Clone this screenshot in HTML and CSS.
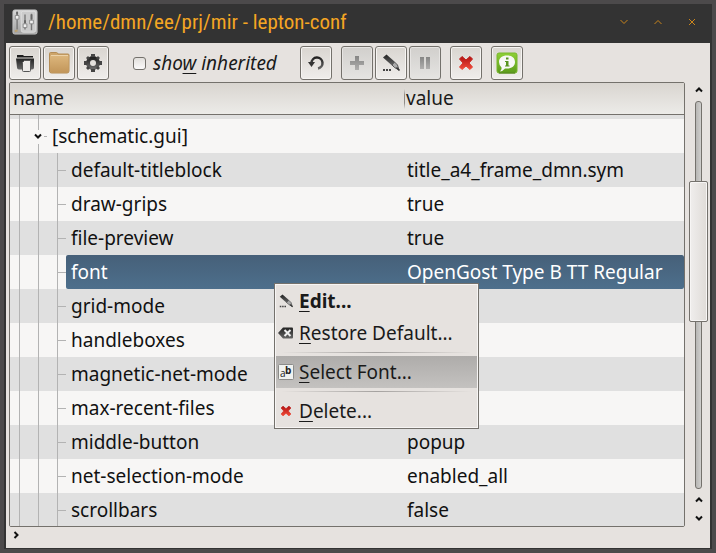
FILE: index.html
```html
<!DOCTYPE html>
<html lang="en">
<head>
<meta charset="utf-8">
<title>/home/dmn/ee/prj/mir - lepton-conf</title>
<link rel="stylesheet" href="styles.css">
</head>
<body>
<svg class="defs" aria-hidden="true">
  <defs>
    <linearGradient id="dark" x1="0" y1="0" x2="0" y2="1"><stop offset="0" stop-color="#222"/><stop offset="1" stop-color="#666"/></linearGradient>
    <linearGradient id="red" x1="0" y1="0" x2="0" y2="1"><stop offset="0" stop-color="#b31212"/><stop offset="1" stop-color="#f04c3a"/></linearGradient>
    <linearGradient id="tan" x1="0" y1="0" x2="0" y2="1"><stop offset="0" stop-color="#dcb67c"/><stop offset="1" stop-color="#c2965a"/></linearGradient>
    <linearGradient id="green" x1="0" y1="0" x2="0" y2="1"><stop offset="0" stop-color="#8ed036"/><stop offset="1" stop-color="#5c9c1c"/></linearGradient>
    <linearGradient id="silver" x1="0" y1="0" x2="0" y2="1"><stop offset="0" stop-color="#d8d8d8"/><stop offset="1" stop-color="#a2a2a2"/></linearGradient>
    <linearGradient id="faded" x1="0" y1="0" x2="0" y2="1"><stop offset="0" stop-color="#858584"/><stop offset="1" stop-color="#b0afae"/></linearGradient>
    <symbol id="pencil" viewBox="0 0 18 18">
      <path d="M1 3.500 4.500 0.500 13 8 10 11.500Z" fill="url(#dark)"/>
      <path d="M10 11 12.500 8 15.500 11 17 16 12.500 13.500Z" fill="#aaa" stroke="#555"/>
      <path d="M14.500 13.500 17.500 16.500" stroke="#333" stroke-width="1.500"/>
      <path d="M1 16h2M4 16h2M7 16h2" stroke="#444" stroke-width="2"/>
    </symbol>
    <symbol id="cross" viewBox="0 0 16 16">
      <path d="M4 1.500 8 5 12 1.500 14.500 4 11 8 14.500 12 12 14.500 8 11 4 14.500 1.500 12 5 8 1.500 4Z" fill="url(#red)" stroke="url(#red)" stroke-linejoin="round"/>
    </symbol>
  </defs>
</svg>
<div class="window">
  <header class="titlebar">
    <svg class="app-icon" width="26" height="26" viewBox="0 0 28 28" aria-hidden="true">
      <rect x="1" y="1" width="26" height="26" rx="2" fill="url(#silver)" stroke="#c5c5c5"/>
      <rect x="10" y="2.500" width="15.500" height="22.500" rx="2" fill="#cbcbcb" stroke="#dedede"/>
      <path d="M5.500 3v19M14 6v16M21 5v18" stroke="#777" stroke-width="1.500"/>
      <path d="M5.500 3v3M14 12v4M21 6v5" stroke="#666" stroke-width="2"/>
      <path d="M3.500 7h4v4h-4zM12 16h4v4h-4zM19 12h4v4h-4z" fill="#f0f0f0" stroke="#888"/>
      <path d="M3 24l3-1" stroke="#bca26e" stroke-width="2"/>
    </svg>
    <h1>/home/dmn/ee/prj/mir - lepton-conf</h1>
    <div class="win-controls">
      <button aria-label="Minimize"><svg width="8" height="8" viewBox="0 0 8 8"><path d="M0.500 2 4 5.500 7.500 2"/></svg></button>
      <button aria-label="Maximize"><svg width="8" height="8" viewBox="0 0 8 8"><path d="M0.500 6 4 2.500 7.500 6"/></svg></button>
      <button aria-label="Close"><svg width="8" height="8" viewBox="0 0 8 8"><path d="M1 1 7 7M7 1 1 7"/></svg></button>
    </div>
  </header>
  <main>
    <div class="toolbar">
      <div class="group">
        <button class="tool" aria-label="Load file"><svg width="20" height="20" viewBox="0 0 20 20"><path d="M2 4V2h6l1 1h9v1.500H2Z" fill="#1d1d1d"/><path d="M1 5.500h18v9q0 2-2 2H4q-2 0-2-2Z" fill="url(#dark)"/><path d="M9.500 7.500h6v10q0 1-1 1h-6q-1 0-1-1v-8Z" fill="#eceae8" stroke="#555"/></svg></button>
        <button class="tool" aria-label="Open folder"><svg width="22" height="22" viewBox="0 0 22 22"><path d="M1.500 3V1.500q0-1 1-1h6q1 0 1.500 1.500h10q1 0 1 1v16q0 2-2 2H3.500q-2 0-2-2Z" fill="#cda469" stroke="#b48c55"/><path d="M2 3.500h18.500v15q0 2-2 2H4q-2 0-2-2Z" fill="url(#tan)"/><path d="M3 3.500h17" stroke="#ecd2a8"/></svg></button>
        <button class="tool" aria-label="Settings"><svg width="20" height="20" viewBox="0 0 20 20"><circle cx="10" cy="10" r="5" fill="none" stroke="url(#dark)" stroke-width="4"/><path d="M8 1h4v3h-4zM8 16h4v3h-4zM1 8h3v4h-3zM16 8h3v4h-3z" fill="#444"/><path d="M3 5 5 3 7 5 5 7zM15 3 17 5 15 7 13 5zM3 15 5 13 7 15 5 17zM13 15 15 13 17 15 15 17z" fill="#444"/></svg></button>
      </div>
      <label class="inherited" for="inh"><input type="checkbox" id="inh"><span>sho<u>w</u> inherited</span></label>
      <button class="tool" aria-label="Reload"><svg width="18" height="18" viewBox="0 0 18 18"><path d="M4.500 10V9A5.500 5.500 0 1 1 11 14.500" fill="none" stroke="url(#dark)" stroke-width="2.500"/><path d="M1 8h7l-3.500 5Z" fill="#333"/></svg></button>
      <div class="group">
        <button class="tool" disabled aria-label="Add"><svg width="14" height="14" viewBox="0 0 14 14"><path d="M5 0h4v5h5v4H9v5H5V9H0V5h5Z" fill="url(#faded)"/></svg></button>
        <button class="tool" aria-label="Edit"><svg width="18" height="18"><use href="#pencil"/></svg></button>
        <button class="tool" disabled aria-label="Toggle"><svg width="12" height="12" viewBox="0 0 12 12"><path d="M1 0h4v12H1zM7 0h4v12H7z" fill="url(#faded)"/></svg></button>
      </div>
      <button class="tool" aria-label="Delete"><svg width="16" height="16"><use href="#cross"/></svg></button>
      <button class="tool" aria-label="About"><svg width="22" height="22" viewBox="0 0 22 22"><rect x="1" y="1" width="20" height="20" rx="2" fill="url(#green)" stroke="#79b82d"/><path d="M3 21h16" stroke="#4d7a1d"/><path d="M11 3.500c5 0 8 2.500 8 6.500s-3 6.500-8 6.500q-1 0-2 0-2 2.500-5 3 2-2 1.500-4Q3 13 3 10c0-4 3-6.500 8-6.500Z" fill="#f8f8f6"/><path d="M10 5.500h2.500v2h-2.500zM9 9h3.500v4.500h1v1H9v-1h1v-3.500H9z" fill="#589420"/></svg></button>
    </div>
    <div class="browser">
      <div class="list">
        <table>
          <colgroup><col class="col-name"><col></colgroup>
          <thead><tr><th>name</th><th>value</th></tr></thead>
          <tbody>
            <tr class="cut odd"><td colspan="2"></td></tr>
            <tr class="section"><td><svg class="expander" width="8" height="7" viewBox="0 0 8 7" aria-hidden="true"><path d="M1 1.500 4 4.500 7 1.500"/></svg>[schematic.gui]</td><td></td></tr>
            <tr class="odd"><td><span>default-titleblock</span></td><td>title_a4_frame_dmn.sym</td></tr>
            <tr><td><span>draw-grips</span></td><td>true</td></tr>
            <tr class="odd"><td><span>file-preview</span></td><td>true</td></tr>
            <tr class="selected"><td><span>font</span></td><td>OpenGost Type B TT Regular</td></tr>
            <tr class="odd"><td><span>grid-mode</span></td><td></td></tr>
            <tr><td><span>handleboxes</span></td><td></td></tr>
            <tr class="odd"><td><span>magnetic-net-mode</span></td><td></td></tr>
            <tr><td><span>max-recent-files</span></td><td></td></tr>
            <tr class="odd"><td><span>middle-button</span></td><td>popup</td></tr>
            <tr><td><span>net-selection-mode</span></td><td>enabled_all</td></tr>
            <tr class="odd"><td><span>scrollbars</span></td><td>false</td></tr>
          </tbody>
        </table>
      </div>
      <div class="scrollbar">
        <svg class="arrow" width="8" height="6" viewBox="0 0 8 6"><path d="M1 4.500 4 1.500 7 4.500"/></svg>
        <div class="track"><div class="thumb"></div></div>
        <svg class="arrow" width="8" height="6" viewBox="0 0 8 6"><path d="M1 4.500 4 1.500 7 4.500"/></svg>
        <svg class="arrow" width="8" height="6" viewBox="0 0 8 6"><path d="M1 1.500 4 4.500 7 1.500"/></svg>
      </div>
    </div>
    <footer><svg class="arrow" width="6" height="8" viewBox="0 0 6 8"><path d="M1.500 1 4.500 4 1.500 7"/></svg></footer>
  </main>
  <div class="menu" role="menu">
    <button role="menuitem" class="default"><svg class="small" width="14" height="14"><use href="#pencil"/></svg><span><u>E</u>dit...</span></button>
    <button role="menuitem"><svg width="16" height="16" viewBox="0 0 16 16"><path d="M0 8 5 2.500h9q1 0 1 1v9q0 1-1 1H5Z" fill="url(#dark)"/><path d="M6.500 5l6 6M12.500 5l-6 6" stroke="#eee" stroke-width="2"/></svg><span><u>R</u>estore Default...</span></button>
    <hr>
    <button role="menuitem" class="active"><svg class="font-icon" width="16" height="16" viewBox="0 0 16 16"><rect x="0.500" y="0.500" width="15" height="15" rx="1" fill="#f0f2f0" stroke="#8b8b89"/><text x="2" y="13" class="glyph">a</text><text x="7" y="10" class="glyph strong">b</text></svg><span><u>S</u>elect Font...</span></button>
    <hr>
    <button role="menuitem"><svg class="cross" width="12" height="12"><use href="#cross"/></svg><span><u>D</u>elete...</span></button>
  </div>
</div>
</body>
</html>
```
FILE: styles.css
```css
* { box-sizing: border-box; }

body {
  margin: 0;
  height: 100vh;
  overflow: hidden;
  background: #4c4a4b;
  color: #1a1a1a;
  font: 19px/28px "Noto Sans", "Open Sans", sans-serif;
}

button { margin: 0; font: inherit; color: inherit; }
svg { display: block; flex: none; }
.defs { position: absolute; width: 0; height: 0; }
u { text-decoration-thickness: 1px; text-underline-offset: 3px; }

.window {
  height: 100%;
  display: flex;
  flex-direction: column;
  border: 4px solid #4c4a4b;
  background: #333;
  padding: 0 2px 1px;
}

.titlebar {
  height: 39px;
  flex: none;
  display: flex;
  align-items: center;
  gap: 10px;
  padding: 0 8px 4px 6px;
}
.titlebar h1 {
  flex: 1;
  margin: 0;
  color: #f5a623;
  font: 400 21px/28px "Roboto Condensed", Roboto, sans-serif;
  white-space: nowrap;
}
.win-controls { display: flex; gap: 14px; }
.win-controls button {
  width: 20px;
  height: 20px;
  padding: 0;
  border: 0;
  background: none;
  display: grid;
  place-items: center;
}
.win-controls path { fill: none; stroke: #c9851c; }

main {
  flex: 1;
  min-height: 0;
  display: flex;
  flex-direction: column;
  background: #e6e2df;
}

.toolbar {
  display: flex;
  align-items: center;
  gap: 9px;
  padding: 3px 3px 2px;
}
.group { display: flex; gap: 2px; }
.tool {
  width: 32px;
  height: 34px;
  padding: 0;
  display: grid;
  place-items: center;
  border: 1px solid #74716c;
  border-radius: 3px;
  background: linear-gradient(#d9d5d0, #efedeb);
  box-shadow: inset 0 0 0 1px #f6f4f2;
}
.tool:disabled { background: linear-gradient(#d1cfcc, #e5e4e2); box-shadow: inset 0 0 0 1px #e6e4e2; }

.inherited {
  display: flex;
  align-items: center;
  gap: 7px;
  margin: 0 14px 0 15px;
  font-style: italic;
}
.inherited input {
  appearance: none;
  width: 13px;
  height: 13px;
  margin: 0;
  border: 1px solid #74716c;
  border-radius: 3px;
  background: linear-gradient(#e2dfdc, #fbfafa);
}

.browser { flex: 1; min-height: 0; display: flex; padding-left: 3px; }
.list {
  flex: 1;
  min-width: 0;
  overflow: hidden;
  border: 1px solid #74716c;
  border-radius: 2px;
  background: #f7f6f5;
}
table { width: 100%; table-layout: fixed; border-collapse: separate; border-spacing: 0; }
.col-name { width: 394px; }
th, td { padding: 0; height: 34px; text-align: left; white-space: nowrap; }
td { color: #111; }
th {
  height: 32px;
  padding: 0 3px 2px;
  font-weight: 400;
  background: linear-gradient(#d9d5d0, #ecebe8);
  border-bottom: 1px solid #74716c;
}
th + th {
  padding-left: 2px;
  background: linear-gradient(transparent 6px, #8f8c88 12px, #8f8c88 20px, transparent 26px) 0 0 / 1px 100% no-repeat, linear-gradient(#d9d5d0, #ecebe8);
}
td + td { padding-left: 3px; }
.odd { background: #e0e0e0; }

/* Tree guides: one vertical line per level, then the branch tick. */
td:first-child {
  padding-left: 56px;
  background:
    linear-gradient(#b3b3b3, #b3b3b3) 9px 0 / 1px 100% no-repeat,
    linear-gradient(#b3b3b3, #b3b3b3) 28px 0 / 1px 100% no-repeat,
    linear-gradient(#b3b3b3, #b3b3b3) 47px 0 / 1px 100% no-repeat,
    linear-gradient(#b3b3b3, #b3b3b3) 48px 17px / 8px 1px no-repeat;
}
td:first-child span { display: block; line-height: 34px; padding-left: 5px; }
.cut td:first-child {
  height: 4px;
  background:
    linear-gradient(#b3b3b3, #b3b3b3) 9px 0 / 1px 100% no-repeat,
    linear-gradient(#b3b3b3, #b3b3b3) 28px 0 / 1px 100% no-repeat;
}
.section td:first-child {
  padding-left: 24px;
  display: flex;
  align-items: center;
  gap: 10px;
  background:
    linear-gradient(#b3b3b3, #b3b3b3) 9px 0 / 1px 100% no-repeat,
    linear-gradient(#b3b3b3 11px, transparent 11px, transparent 25px, #b3b3b3 25px) 28px 0 / 1px 100% no-repeat,
    linear-gradient(#b3b3b3, #b3b3b3) 34px 17px / 3px 1px no-repeat;
}
.selected td { color: #fff; }
.selected span, .selected td + td { background: linear-gradient(#466079, #4d6f8c); }
.selected span { border-radius: 2px 0 0 2px; }
.selected td + td { border-radius: 0 2px 2px 0; }

.arrow path, .expander path { fill: none; stroke: #111; stroke-width: 2; }

.scrollbar {
  width: 25px;
  flex: none;
  display: flex;
  flex-direction: column;
  align-items: center;
  gap: 12px;
  padding: 5px 0 6px;
}
.track {
  flex: 1;
  width: 7px;
  display: flex;
  justify-content: center;
  padding-top: 79px;
  margin: -4px 0 -4px 2px;
  border: 1px solid #74716c;
  border-radius: 3px;
  background: linear-gradient(90deg, #b7b6b4, #cfcecc);
}
.scrollbar .arrow { margin-left: 2px; }
.thumb {
  flex: none;
  width: 19px;
  height: 46%;
  border: 1px solid #74716c;
  border-radius: 2px;
  background: linear-gradient(90deg, #f0eeed, #dfdbd7);
  box-shadow: inset 0 0 0 1px #f7f5f4;
}

footer { height: 21px; flex: none; padding: 4px 7px; }

.menu {
  position: absolute;
  left: 274px;
  top: 283px;
  width: 205px;
  padding: 1px;
  border: 1px solid #74716c;
  background: #e6e2df;
  box-shadow: inset 0 0 0 1px #f7f5f4;
}
.menu button {
  display: flex;
  align-items: center;
  gap: 5px;
  width: 100%;
  height: 32px;
  padding: 0 2px;
  border: 0;
  background: none;
  text-align: left;
  white-space: nowrap;
}
.menu .default { font-weight: 700; }
.menu .active { background: linear-gradient(#aeacaa, #c4c2c0); }
.menu .small { margin: 0 1px; }
.menu .cross { margin: 0 2px; }
.menu hr {
  height: 1px;
  margin: 3px 5px;
  border: 0;
  background: linear-gradient(90deg, transparent, #a5a2a0, transparent);
}
.font-icon { overflow: visible; }
.glyph { font: 10px "Open Sans", sans-serif; fill: #222; }
.strong { font-weight: 700; }
```
